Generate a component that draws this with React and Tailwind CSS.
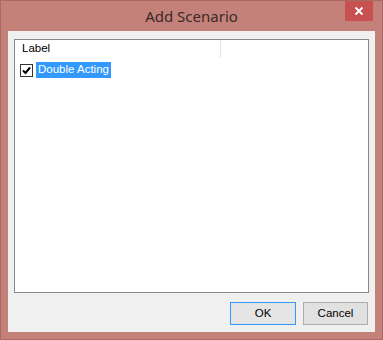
import React from 'react';

export default function App() {
  return (
    <div
      className="w-[383px] h-[340px] bg-[#c3817a] border border-[#a86a63] flex flex-col relative"
      style={{ fontFamily: '"Liberation Sans", Arial, sans-serif' }}
    >
      <div
        className="h-[30px] flex items-center justify-center text-[15px] text-[#3a2a28]"
        style={{ fontFamily: '"Noto Sans", sans-serif' }}
      >
        Add Scenario
      </div>
      <div className="absolute right-[9px] top-0 w-[28px] h-[20px] bg-[#c75050] flex items-center justify-center">
        <svg width="10" height="10" viewBox="0 0 10 10">
          <path d="M1.5 1.5 L8.5 8.5 M8.5 1.5 L1.5 8.5" stroke="white" strokeWidth="1.8" />
        </svg>
      </div>
      <div className="mx-[7px] mb-[7px] flex-1 bg-[#f0f0f0] flex flex-col px-[6px] pt-[8px] pb-[7px]">
        <div className="h-[254px] bg-white border border-[#828790] flex flex-col">
          <div className="h-[18px] flex text-[11.5px] text-black">
            <div className="w-[206px] pl-[7px] flex items-center border-r border-[#e5e5e5]">Label</div>
            <div className="flex-1" />
          </div>
          <div className="h-[18px] flex items-center pl-[5px] mt-[3px] text-[11.5px]">
            <div className="w-[13px] h-[13px] border border-[#333] bg-white flex items-center justify-center">
              <svg width="9" height="9" viewBox="0 0 9 9">
                <path d="M1 4.5 L3.5 7 L8 1.5" stroke="black" strokeWidth="2" fill="none" />
              </svg>
            </div>
            <div className="ml-[3px] bg-[#3399ff] text-white h-[16px] px-[2px] flex items-center">
              Double Acting
            </div>
          </div>
        </div>
        <div className="flex justify-end gap-[7px] mt-[9px] pr-[1px]">
          <button className="w-[66px] h-[23px] bg-[#e5e5e5] border border-[#3399ff] text-[11.5px] text-black">
            OK
          </button>
          <button className="w-[65px] h-[23px] bg-[#e1e1e1] border border-[#adadad] text-[11.5px] text-black">
            Cancel
          </button>
        </div>
      </div>
    </div>
  );
}
